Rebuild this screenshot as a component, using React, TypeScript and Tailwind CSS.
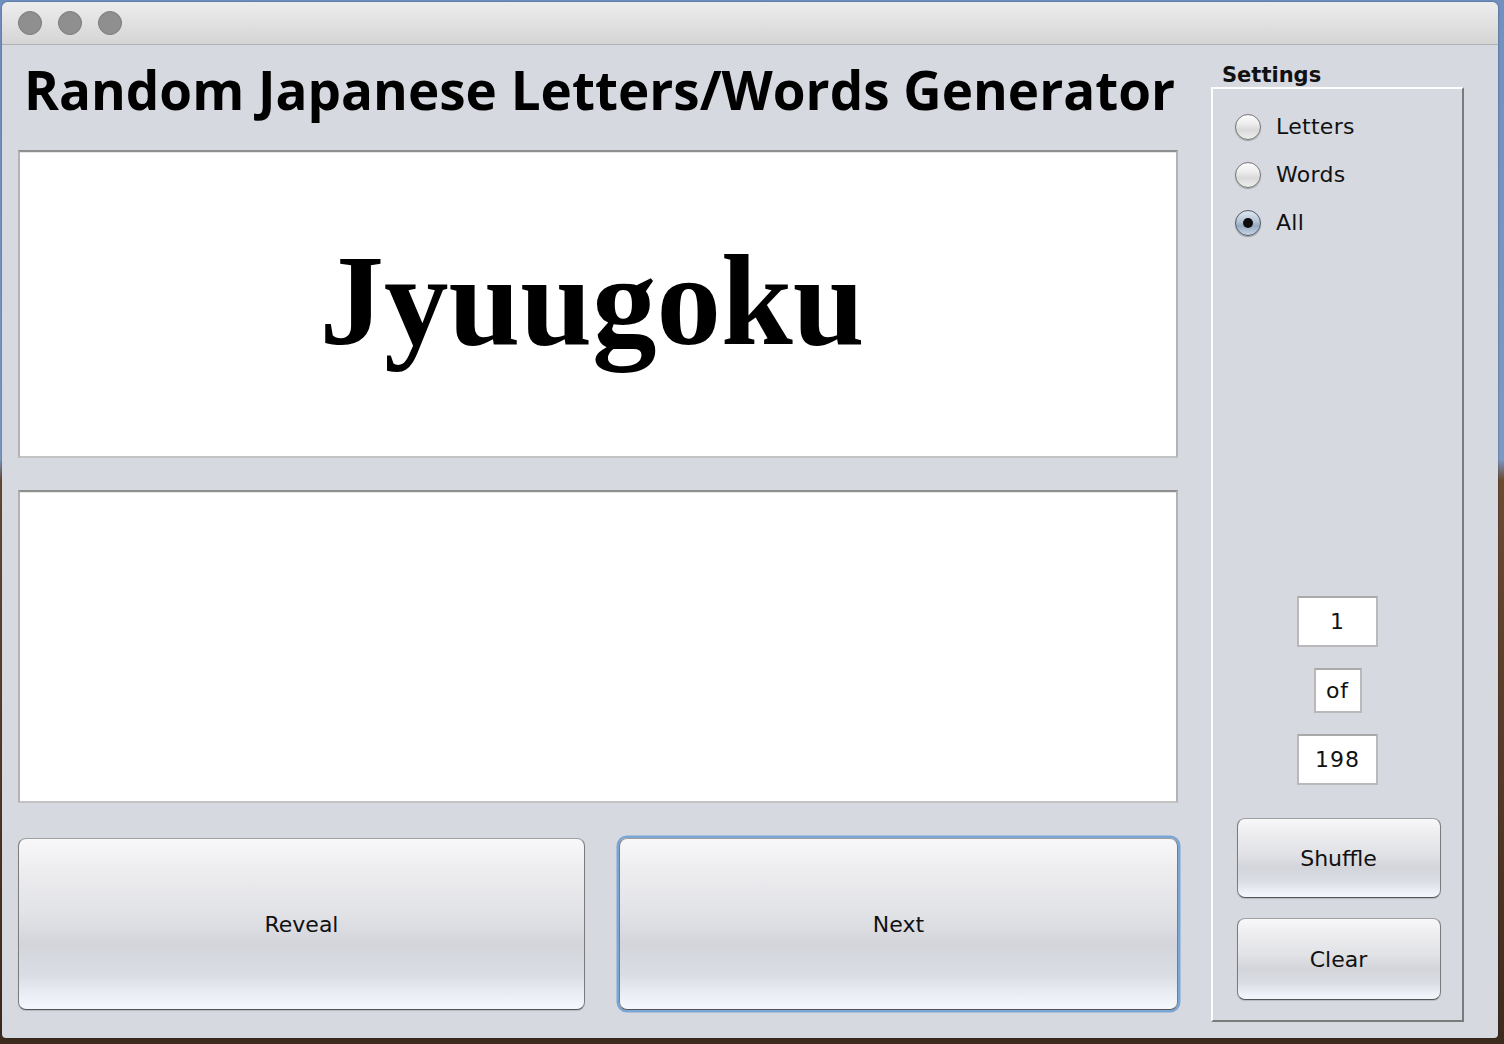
import React, { useState } from 'react';

type Mode = 'letters' | 'words' | 'all';

const Radio: React.FC<{ checked: boolean; label: string; onClick: () => void }> = ({ checked, label, onClick }) => (
  <div className="h-[48px] flex items-center gap-[15px] cursor-default" onClick={onClick}>
    {checked ? (
      <span className="w-[26px] h-[26px] rounded-full border-[1.5px] border-[#4f5b6a] bg-[linear-gradient(to_bottom,#dfe8f2_0%,#b3c2d4_45%,#98abc3_62%,#c6d5e7_100%)] shadow-[0_1px_1px_rgba(0,0,0,0.3)] flex items-center justify-center">
        <span className="w-[10px] h-[10px] rounded-full bg-[#0d0d0d]" />
      </span>
    ) : (
      <span className="w-[26px] h-[26px] rounded-full border-[1.5px] border-[#767676] bg-[linear-gradient(to_bottom,#fdfdfd_0%,#eeeeee_35%,#d9d9d9_62%,#eeeeee_100%)] shadow-[0_1px_1px_rgba(0,0,0,0.25)]" />
    )}
    <span className="text-[22px] leading-none tracking-[0.3px] text-[#111]">{label}</span>
  </div>
);

const AquaButton: React.FC<{ label: string; className: string; focused?: boolean }> = ({ label, className, focused }) => (
  <button
    className={`${className} rounded-[8px] border-[1.5px] border-t-[#a0a0a0] border-x-[#7c7c7c] border-b-[#555] bg-[linear-gradient(to_bottom,#f8f8fa_0%,#ececef_20%,#e1e2e6_45%,#d3d5db_62%,#dadde4_80%,#eef1f8_94%,#f4f7fd_100%)] text-[22px] text-[#111] flex items-center justify-center ${
      focused ? 'shadow-[0_0_0_2.5px_#7aa6d6]' : 'shadow-[0_1px_1px_rgba(0,0,0,0.15)]'
    }`}
  >
    {label}
  </button>
);

const Field: React.FC<{ value: string; className: string }> = ({ value, className }) => (
  <div className={`${className} bg-white border-2 border-[#b9b9b9] border-t-[#a9a9a9] flex items-center justify-center text-[22px] tracking-[1px] text-[#111]`}>
    {value}
  </div>
);

const App: React.FC = () => {
  const [mode, setMode] = useState<Mode>('all');

  return (
    <div className="w-[1504px] h-[1044px] overflow-hidden pt-[2px] pl-[2px] bg-[linear-gradient(to_bottom,#7090c0_0%,#7d99c3_44%,#6a4a33_46%,#3e2b1f_100%)] font-['DejaVu_Sans',sans-serif]">
      <div className="w-[1496px] h-[1036px] rounded-t-[6px] rounded-b-[4px] overflow-hidden bg-[#d6d9e0] shadow-[0_0_2px_rgba(0,0,0,0.45)] flex flex-col">
        {/* Title bar */}
        <div className="h-[43px] shrink-0 border-b border-[#b1b1b1] bg-[linear-gradient(to_bottom,#ededed,#d5d5d5)] flex items-center gap-[16px] pl-[16px] pb-[1px]">
          <span className="w-[24px] h-[24px] rounded-full bg-[#8f8f8f] border border-[#7b7b7b]" />
          <span className="w-[24px] h-[24px] rounded-full bg-[#8f8f8f] border border-[#7b7b7b]" />
          <span className="w-[24px] h-[24px] rounded-full bg-[#8f8f8f] border border-[#7b7b7b]" />
        </div>

        <div className="flex pl-[16px]">
          {/* Left column */}
          <div className="w-[1162px] flex flex-col">
            <div className="h-[105px] pt-[13px] pl-[6px]">
              <h1 className="font-['Open_Sans',sans-serif] font-bold text-[53px] leading-[64px] text-black whitespace-nowrap">
                Random Japanese Letters/Words Generator
              </h1>
            </div>

            <div className="w-[1160px] h-[308px] bg-white border-2 border-t-[#8f8f8f] border-x-[#b3b3b3] border-b-[#c3c3c3] shadow-[inset_0_1px_0_#e6e6e6] flex items-center justify-center pb-[8px] pr-[12px]">
              <span className="font-['Liberation_Serif',serif] font-bold text-[129px] leading-none text-black">Jyuugoku</span>
            </div>

            <div className="mt-[32px] w-[1160px] h-[313px] bg-white border-2 border-t-[#8f8f8f] border-x-[#b3b3b3] border-b-[#c3c3c3] shadow-[inset_0_1px_0_#e6e6e6]" />

            <div className="mt-[35px] flex">
              <AquaButton label="Reveal" className="w-[567px] h-[172px]" />
              <AquaButton label="Next" className="ml-[34px] w-[559px] h-[172px]" focused />
            </div>
          </div>

          {/* Settings */}
          <div className="ml-[31px] w-[253px] flex flex-col">
            <div className="h-[42px] pt-[18px] pl-[11px]">
              <span className="block font-bold text-[21px] leading-[24px] text-[#111]">Settings</span>
            </div>
            <div className="h-[935px] border-2 border-t-[#fdfdfd] border-l-[#fdfdfd] border-r-[#7b7b7b] border-b-[#7b7b7b] flex flex-col pt-[14px]">
              <div className="pl-[22px]">
                <Radio label="Letters" checked={mode === 'letters'} onClick={() => setMode('letters')} />
                <Radio label="Words" checked={mode === 'words'} onClick={() => setMode('words')} />
                <Radio label="All" checked={mode === 'all'} onClick={() => setMode('all')} />
              </div>

              <div className="mt-[349px] flex flex-col items-center">
                <Field value="1" className="w-[81px] h-[51px]" />
                <Field value="of" className="mt-[21px] w-[48px] h-[45px]" />
                <Field value="198" className="mt-[21px] w-[81px] h-[51px]" />
              </div>

              <div className="mt-[33px] flex flex-col items-center pl-[2px]">
                <AquaButton label="Shuffle" className="w-[204px] h-[80px]" />
                <AquaButton label="Clear" className="mt-[20px] w-[204px] h-[82px]" />
              </div>
            </div>
          </div>
        </div>
      </div>
    </div>
  );
};

export default App;
